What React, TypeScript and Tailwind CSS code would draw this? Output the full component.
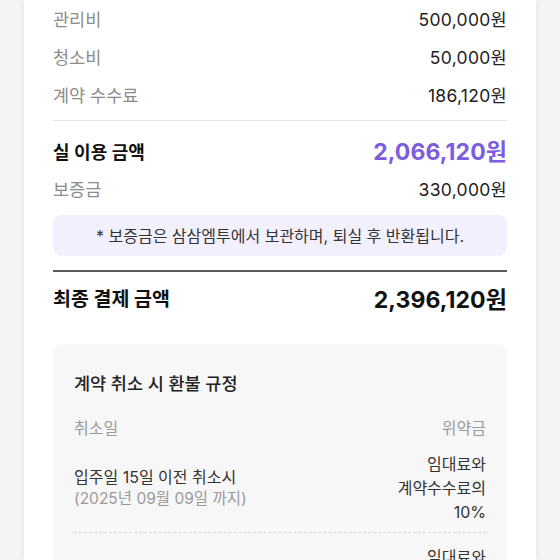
import React from "react";

const font = { fontFamily: 'Inter, "Noto Sans CJK KR", sans-serif' };

function Row({ label, value }: { label: string; value: string }) {
  return (
    <div className="flex h-[38px] items-center justify-between">
      <span className="text-[17.5px] text-[#8c8c8c]">{label}</span>
      <span className="text-[17.5px] tracking-[0.3px] text-[#222222]">{value}</span>
    </div>
  );
}

export default function App() {
  return (
    <div className="flex h-[560px] w-[560px] overflow-hidden bg-[#f4f4f4]" style={font}>
      <div className="ml-[24px] w-[512px] shrink-0 bg-white px-[29px] shadow-[0_0_6px_rgba(0,0,0,0.08)]">
        <div className="mt-px">
          <Row label="관리비" value="500,000원" />
          <Row label="청소비" value="50,000원" />
          <Row label="계약 수수료" value="186,120원" />
        </div>
        <div className="mt-[5px] h-px bg-[#e4e4e4]" />
        <div className="mt-[12px] flex h-[38px] items-center justify-between">
          <span className="text-[18px] font-semibold text-[#111111]">실 이용 금액</span>
          <span className="text-[23px] font-bold tracking-[0.1px] text-[#7c5ce0]">2,066,120원</span>
        </div>
        <Row label="보증금" value="330,000원" />
        <div className="mt-[6px] flex h-[41px] items-center justify-center rounded-[8px] bg-[#f3f0fd] text-[16px] text-[#333333]">
          * 보증금은 삼삼엠투에서 보관하며, 퇴실 후 반환됩니다.
        </div>
        <div className="mt-[14px] h-[2px] bg-[#5a5a5a]" />
        <div className="flex h-[56px] items-center justify-between">
          <span className="text-[19.5px] font-bold text-[#111111]">최종 결제 금액</span>
          <span className="text-[23px] font-bold tracking-[0.1px] text-[#111111]">2,396,120원</span>
        </div>
        <div className="mt-[16px] rounded-[10px] bg-[#f7f7f7] px-[21px] pt-[28px] pb-[20px]">
          <div className="text-[17.5px] font-medium leading-[24px] text-[#222222]">계약 취소 시 환불 규정</div>
          <div className="mt-[20px] flex justify-between text-[16px] leading-[24px] text-[#9a9a9a]">
            <span>취소일</span>
            <span>위약금</span>
          </div>
          <div className="mt-[12px] flex items-center justify-between border-b border-dashed border-[#dcdcdc] pb-[8px]">
            <div className="flex flex-col">
              <span className="text-[16px] leading-[22px] text-[#333333]">입주일 15일 이전 취소시</span>
              <span className="text-[15.5px] leading-[22px] text-[#9a9a9a]">(2025년 09월 09일 까지)</span>
            </div>
            <div className="flex flex-col items-end text-right text-[16px] leading-[24px] text-[#333333]">
              <span>임대료와</span>
              <span>계약수수료의</span>
              <span>10%</span>
            </div>
          </div>
          <div className="flex items-center justify-between pt-[12px]">
            <div className="flex flex-col">
              <span className="text-[16px] leading-[22px] text-[#333333]">입주일 7일 이전 취소시</span>
              <span className="text-[15.5px] leading-[22px] text-[#9a9a9a]">(2025년 09월 17일 까지)</span>
            </div>
            <div className="flex flex-col items-end text-right text-[16px] leading-[24px] text-[#333333]">
              <span>임대료와</span>
              <span>계약수수료의</span>
              <span>30%</span>
            </div>
          </div>
        </div>
      </div>
    </div>
  );
}
